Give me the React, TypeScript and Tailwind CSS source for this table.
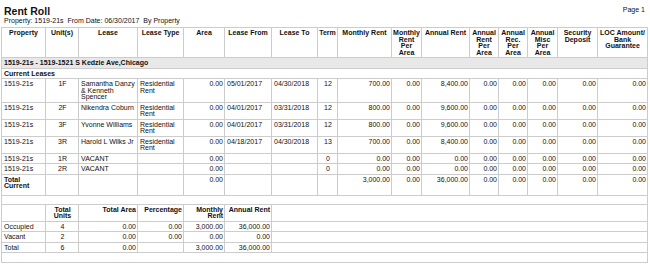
const COLS = [44, 33, 59, 46, 41, 47, 46, 20, 54, 30, 48, 29, 29, 30, 40, 50];

type Lease = {
  prop: string;
  unit: string;
  lease: string;
  type: string;
  from: string;
  to: string;
  term: string;
  monthly: string;
  annual: string;
};

const LEASES: Lease[] = [
  { prop: "1519-21s", unit: "1F", lease: "Samantha Danzy & Kenneth Spencer", type: "Residential Rent", from: "05/01/2017", to: "04/30/2018", term: "12", monthly: "700.00", annual: "8,400.00" },
  { prop: "1519-21s", unit: "2F", lease: "Nikendra Coburn", type: "Residential Rent", from: "04/01/2017", to: "03/31/2018", term: "12", monthly: "800.00", annual: "9,600.00" },
  { prop: "1519-21s", unit: "3F", lease: "Yvonne Williams", type: "Residential Rent", from: "04/01/2017", to: "03/31/2018", term: "12", monthly: "800.00", annual: "9,600.00" },
  { prop: "1519-21s", unit: "3R", lease: "Harold L Wilks Jr", type: "Residential Rent", from: "04/18/2017", to: "04/30/2018", term: "13", monthly: "700.00", annual: "8,400.00" },
  { prop: "1519-21s", unit: "1R", lease: "VACANT", type: "", from: "", to: "", term: "0", monthly: "0.00", annual: "0.00" },
  { prop: "1519-21s", unit: "2R", lease: "VACANT", type: "", from: "", to: "", term: "0", monthly: "0.00", annual: "0.00" },
];

const SUMMARY = [
  { label: "Occupied", units: "4", area: "0.00", pct: "0.00", monthly: "3,000.00", annual: "36,000.00" },
  { label: "Vacant", units: "2", area: "0.00", pct: "0.00", monthly: "0.00", annual: "0.00" },
  { label: "Total", units: "6", area: "0.00", pct: "", monthly: "3,000.00", annual: "36,000.00" },
];

const cell = "border border-[#cccccc] pl-[2px] pr-[1px] pt-[2px] pb-[1px] align-top leading-[6.5px]";
const head = "border border-[#cccccc] px-[1px] pt-[2px] pb-[1px] align-top leading-[6.5px] font-bold text-center";
const tot = "border border-[#cccccc] pl-[2px] pr-[1px] pt-[2px] pb-[5px] align-top leading-[6.5px]";

function App() {
  return (
    <div className="w-[650px] h-[267px] bg-white text-[#111] font-['Liberation_Sans',Arial,sans-serif] text-[7px] overflow-hidden">
      {/* Title */}
      <div className="flex justify-between pl-[4px] pr-[5px]">
        <div>
          <div className="pt-[5px] text-[10.5px] leading-[12px] font-bold">Rent Roll</div>
          <div className="leading-[8px] whitespace-pre">Property: 1519-21s  From Date: 06/30/2017  By Property</div>
        </div>
        <div className="pt-[6px] leading-[8px]">Page 1</div>
      </div>

      <table className="mt-[2px] ml-[1px] w-[646px] table-fixed border-collapse">
        <colgroup>
          {COLS.map((w, i) => (
            <col key={i} style={{ width: w }} />
          ))}
        </colgroup>
        <thead>
          <tr>
            <th className={head}>Property</th>
            <th className={head}>Unit(s)</th>
            <th className={head}>Lease</th>
            <th className={head}>Lease Type</th>
            <th className={head}>Area</th>
            <th className={head}>Lease From</th>
            <th className={head}>Lease To</th>
            <th className={head}>Term</th>
            <th className={head}>Monthly Rent</th>
            <th className={head}>Monthly Rent Per Area</th>
            <th className={head}>Annual Rent</th>
            <th className={head}>Annual Rent Per Area</th>
            <th className={head}>Annual Rec. Per Area</th>
            <th className={head}>Annual Misc Per Area</th>
            <th className={head}>Security Deposit</th>
            <th className={head}>LOC Amount/ Bank Guarantee</th>
          </tr>
        </thead>
        <tbody>
          <tr className="bg-[#e8e8e8]">
            <td colSpan={16} className={`${cell} font-bold`}>1519-21s - 1519-1521 S Kedzie Ave,Chicago</td>
          </tr>
          <tr>
            <td colSpan={16} className={`${cell} font-bold`}>Current Leases</td>
          </tr>
          {LEASES.map((l) => (
            <tr key={l.unit}>
              <td className={cell}>{l.prop}</td>
              <td className={`${cell} text-center`}>{l.unit}</td>
              <td className={cell}>{l.lease}</td>
              <td className={cell}>{l.type}</td>
              <td className={`${cell} text-right`}>0.00</td>
              <td className={cell}>{l.from}</td>
              <td className={cell}>{l.to}</td>
              <td className={`${cell} text-center`}>{l.term}</td>
              <td className={`${cell} text-right`}>{l.monthly}</td>
              <td className={`${cell} text-right`}>0.00</td>
              <td className={`${cell} text-right`}>{l.annual}</td>
              <td className={`${cell} text-right`}>0.00</td>
              <td className={`${cell} text-right`}>0.00</td>
              <td className={`${cell} text-right`}>0.00</td>
              <td className={`${cell} text-right`}>0.00</td>
              <td className={`${cell} text-right`}>0.00</td>
            </tr>
          ))}
          <tr>
            <td className={`${tot} font-bold`}>Total Current</td>
            <td className={tot}></td>
            <td className={tot}></td>
            <td className={tot}></td>
            <td className={`${tot} text-right`}>0.00</td>
            <td className={tot}></td>
            <td className={tot}></td>
            <td className={tot}></td>
            <td className={`${tot} text-right`}>3,000.00</td>
            <td className={`${tot} text-right`}>0.00</td>
            <td className={`${tot} text-right`}>36,000.00</td>
            <td className={`${tot} text-right`}>0.00</td>
            <td className={`${tot} text-right`}>0.00</td>
            <td className={`${tot} text-right`}>0.00</td>
            <td className={`${tot} text-right`}>0.00</td>
            <td className={`${tot} text-right`}>0.00</td>
          </tr>
          <tr>
            <td colSpan={16} className="border border-[#cccccc] h-[9px]"></td>
          </tr>

          {/* Summary */}
          <tr>
            <td className={cell}></td>
            <td className={`${cell} text-center font-bold`}>Total Units</td>
            <td className={`${cell} text-right font-bold`}>Total Area</td>
            <td className={`${cell} text-right font-bold`}>Percentage</td>
            <td className={`${cell} text-right font-bold`}>Monthly Rent</td>
            <td className={`${cell} text-right font-bold`}>Annual Rent</td>
            <td colSpan={10} className={cell}></td>
          </tr>
          {SUMMARY.map((s) => (
            <tr key={s.label}>
              <td className={cell}>{s.label}</td>
              <td className={`${cell} text-center`}>{s.units}</td>
              <td className={`${cell} text-right`}>{s.area}</td>
              <td className={`${cell} text-right`}>{s.pct}</td>
              <td className={`${cell} text-right`}>{s.monthly}</td>
              <td className={`${cell} text-right`}>{s.annual}</td>
              <td colSpan={10} className={cell}></td>
            </tr>
          ))}
          <tr>
            <td colSpan={16} className="border border-[#cccccc] h-[10px]"></td>
          </tr>
        </tbody>
      </table>
    </div>
  );
}

export default App;
